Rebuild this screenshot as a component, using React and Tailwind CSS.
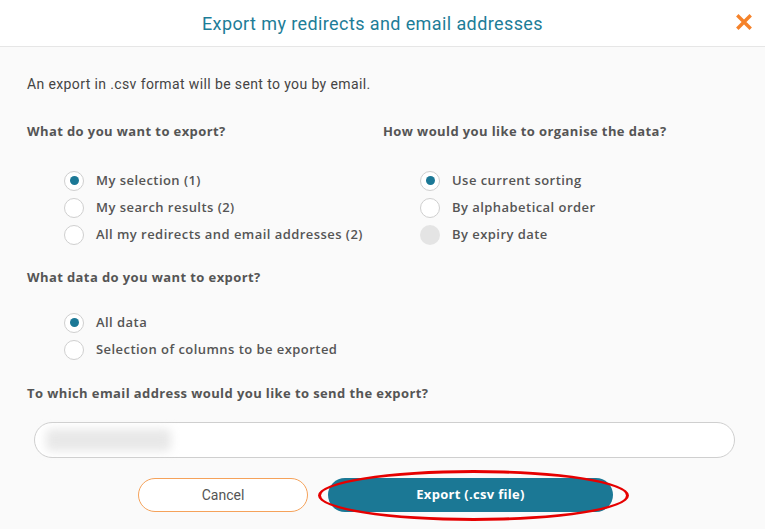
import React, { useState } from "react";

const Radio = ({ label, checked, disabled, onClick }) => (
  <div
    className="flex items-center h-[27px] cursor-pointer"
    onClick={disabled ? undefined : onClick}
  >
    {disabled ? (
      <span className="w-5 h-5 rounded-full bg-[#e4e4e4] shrink-0"></span>
    ) : (
      <span className="w-5 h-5 rounded-full border border-[#cfcfcf] bg-white flex items-center justify-center shrink-0">
        {checked && <span className="w-[9px] h-[9px] rounded-full bg-[#1b7896]"></span>}
      </span>
    )}
    <span className="ml-3 text-[13px] font-semibold tracking-[0.45px] text-[#555]">{label}</span>
  </div>
);

const App = () => {
  const [what, setWhat] = useState(0);
  const [order, setOrder] = useState(0);
  const [data, setData] = useState(0);

  return (
    <div
      className="w-[765px] h-[529px] bg-[#fafafa] overflow-hidden"
      style={{ fontFamily: "'Open Sans', Lato, sans-serif" }}
    >
      {/* Header */}
      <div className="relative h-[47px] bg-white border-b border-[#e6e6e6] flex items-center justify-center pr-[20px]">
        <h1
          className="text-[18px] text-[#1d7d98] tracking-[0.4px]"
          style={{ fontFamily: "Roboto, sans-serif" }}
        >
          Export my redirects and email addresses
        </h1>
        <button className="absolute right-[12px] top-[12px] w-[18px] h-[20px] flex items-center justify-center">
          <svg width="16" height="16" viewBox="0 0 16 16">
            <path d="M2.5 2.5 L13.5 13.5 M13.5 2.5 L2.5 13.5" stroke="#f5822a" strokeWidth="3.4" strokeLinecap="square" />
          </svg>
        </button>
      </div>

      {/* Body */}
      <div className="pl-[27px] pr-[30px] pt-[27px]">
        <p
          className="h-5 leading-5 text-[14px] tracking-[0.38px] text-[#444]"
          style={{ fontFamily: "Roboto, sans-serif" }}
        >
          An export in .csv format will be sent to you by email.
        </p>

        <div className="flex mt-[27px]">
          <div className="w-[356px]">
            <h2 className="h-5 leading-5 text-[13px] font-bold tracking-[0.4px] text-[#555]">What do you want to export?</h2>
            <div className="pl-[37px] mt-[26px]">
              {["My selection (1)", "My search results (2)", "All my redirects and email addresses (2)"].map((l, i) => (
                <Radio key={l} label={l} checked={what === i} onClick={() => setWhat(i)} />
              ))}
            </div>
          </div>
          <div>
            <h2 className="h-5 leading-5 text-[13px] font-bold tracking-[0.4px] text-[#555]">How would you like to organise the data?</h2>
            <div className="pl-[37px] mt-[26px]">
              <Radio label="Use current sorting" checked={order === 0} onClick={() => setOrder(0)} />
              <Radio label="By alphabetical order" checked={order === 1} onClick={() => setOrder(1)} />
              <Radio label="By expiry date" disabled />
            </div>
          </div>
        </div>

        <h2 className="h-5 leading-5 mt-[19px] text-[13px] font-bold tracking-[0.4px] text-[#555]">What data do you want to export?</h2>
        <div className="pl-[37px] mt-[22px]">
          <Radio label="All data" checked={data === 0} onClick={() => setData(0)} />
          <Radio label="Selection of columns to be exported" checked={data === 1} onClick={() => setData(1)} />
        </div>

        <h2 className="h-5 leading-5 mt-[20px] text-[13px] font-bold tracking-[0.4px] text-[#555]">To which email address would you like to send the export?</h2>

        {/* Email input (blurred) */}
        <div className="ml-[7px] mt-[19px] h-[36px] rounded-full border border-[#cfcfcf] bg-white flex items-center pl-[11px]">
          <div className="w-[125px] h-[22px] bg-[#e8e8e8] blur-[5px] rounded"></div>
        </div>

        {/* Buttons */}
        <div className="flex mt-[20px] pl-[111px] gap-5">
          <button
            className="w-[170px] h-[34px] rounded-full border border-[#f5a25a] bg-white text-[14px] text-[#555]"
            style={{ fontFamily: "Roboto, sans-serif" }}
          >
            Cancel
          </button>
          <div className="relative">
            <button className="w-[285px] h-[34px] rounded-full bg-[#1b7895] text-white text-[13px] font-bold tracking-[0.3px]">
              Export (.csv file)
            </button>
            <div className="absolute left-[-10px] top-[-8px] w-[311px] h-[51px] rounded-[50%] border-[3px] border-[#e60000] pointer-events-none"></div>
          </div>
        </div>
      </div>
    </div>
  );
};

export default App;
